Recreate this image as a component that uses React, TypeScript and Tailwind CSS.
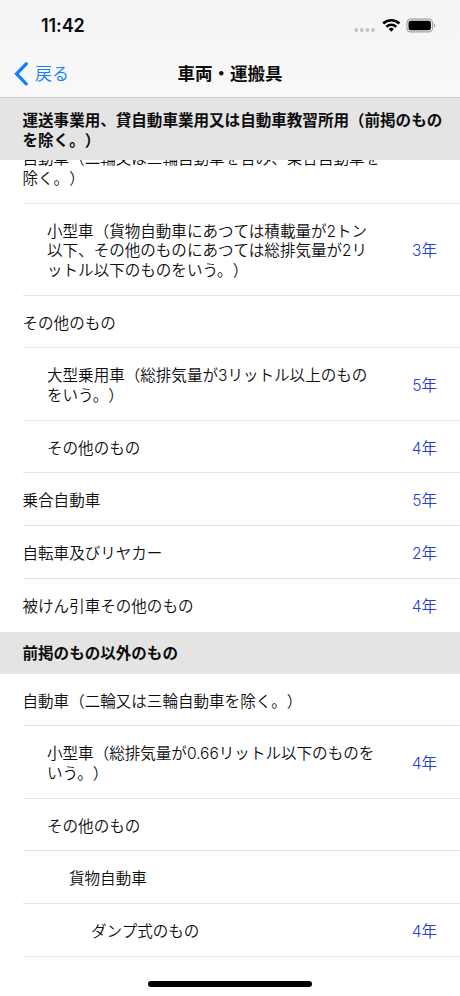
import clsx from "clsx";

type Item = {
  lines: string[];
  level?: 0 | 1 | 2 | 3;
  years?: string;
};

const transportItems: Item[] = [
  { lines: ["自動車（二輪又は三輪自動車を含み、乗合自動車を", "除く。）"] },
  {
    lines: [
      "小型車（貨物自動車にあつては積載量が2トン",
      "以下、その他のものにあつては総排気量が2リ",
      "ットル以下のものをいう。）",
    ],
    level: 1,
    years: "3年",
  },
  { lines: ["その他のもの"] },
  { lines: ["大型乗用車（総排気量が3リットル以上のもの", "をいう。）"], level: 1, years: "5年" },
  { lines: ["その他のもの"], level: 1, years: "4年" },
  { lines: ["乗合自動車"], years: "5年" },
  { lines: ["自転車及びリヤカー"], years: "2年" },
  { lines: ["被けん引車その他のもの"], years: "4年" },
];

const otherItems: Item[] = [
  { lines: ["自動車（二輪又は三輪自動車を除く。）"] },
  { lines: ["小型車（総排気量が0.66リットル以下のものを", "いう。）"], level: 1, years: "4年" },
  { lines: ["その他のもの"], level: 1 },
  { lines: ["貨物自動車"], level: 2 },
  { lines: ["ダンプ式のもの"], level: 3, years: "4年" },
];

const indents = ["pl-0", "pl-[24.5px]", "pl-[46.5px]", "pl-[68.5px]"];

const StatusBar = () => (
  <div className="flex h-[50px] items-center justify-between pl-[41px] pr-[24px] pt-[1px]">
    <span className="pt-[1px] text-[18px] font-semibold leading-none tracking-[-0.1px]">11:42</span>
    <div className="flex items-center">
      <svg width="22" height="16" viewBox="0 0 22 16" fill="#c3c3c3">
        <circle cx="2.2" cy="12" r="1.9" />
        <circle cx="7.8" cy="12" r="1.9" />
        <circle cx="13.4" cy="12" r="1.9" />
        <circle cx="19" cy="12" r="1.9" />
      </svg>
      <svg className="ml-[6px]" width="19" height="16" viewBox="0 0 19 16" fill="none" stroke="#000">
        <path d="M1.2 5.5a11.8 11.8 0 0 1 16.2 0" strokeWidth="2.6" />
        <path d="M4.3 8.8a7.3 7.3 0 0 1 10 0" strokeWidth="2.4" />
        <path d="M9.3 13.7 6.6 11a4 4 0 0 1 5.4 0z" fill="#000" stroke="none" />
      </svg>
      <svg className="ml-[5px]" width="30" height="16" viewBox="0 0 30 16">
        <rect x="0.9" y="1.1" width="25.6" height="12.8" rx="3.8" fill="none" stroke="#a3a3a3" strokeWidth="1.2" />
        <rect x="2.5" y="2.7" width="22.4" height="9.6" rx="2.2" fill="#000" />
        <path d="M27.9 5.3v4.4c.9-.4 1.5-1.2 1.5-2.2s-.6-1.8-1.5-2.2z" fill="#a3a3a3" />
      </svg>
    </div>
  </div>
);

const NavBar = () => (
  <div className="grid h-[47px] grid-cols-3 items-center pt-[1px]">
    <button type="button" className="flex items-center pl-[14px] text-[#147efb]">
      <svg width="15" height="24" viewBox="0 0 15 24" fill="none" stroke="currentColor" strokeWidth="3.3">
        <path d="M12.2 1.8 2.6 11.8l9.6 10" strokeLinecap="round" strokeLinejoin="miter" />
      </svg>
      <span className="ml-[6px] text-[17px] font-[350] leading-none">戻る</span>
    </button>
    <h1 className="text-center text-[17.5px] font-bold leading-none">車両・運搬具</h1>
  </div>
);

const SectionHeader = ({ lines, className }: { lines: string[]; className?: string }) => (
  <h2
    className={clsx(
      "bg-[#e4e4e4] pl-[22.5px] text-[15.55px] font-bold leading-[19.7px] whitespace-nowrap",
      className
    )}
  >
    {lines.map((line) => (
      <span key={line} className="block">
        {line}
      </span>
    ))}
  </h2>
);

const Row = ({ lines, level = 0, years, last }: Item & { last?: boolean }) => (
  <li
    className={clsx(
      "ml-[22.5px] flex items-center justify-between border-b pt-[18px] pb-[14px] pr-[23px] text-[15.55px] font-[350] leading-[19.7px]",
      last ? "border-transparent" : "border-[#e4e4e6]"
    )}
  >
    <div className={clsx("whitespace-nowrap", indents[level])}>
      {lines.map((line) => (
        <span key={line} className="block">
          {line}
        </span>
      ))}
    </div>
    {years && <span className="text-[#2640d0]">{years}</span>}
  </li>
);

const App = () => {
  return (
    <div className="relative flex h-[996px] w-[460px] flex-col overflow-hidden bg-white font-['Inter','Noto_Sans_CJK_JP',sans-serif] text-[#0c0c0c] [text-spacing-trim:space-all]">
      <header className="z-10 shrink-0 border-b border-[#cfcfcf] bg-linear-to-b from-[#f4f4f4] to-[#f9f9f9]">
        <StatusBar />
        <NavBar />
      </header>
      <SectionHeader
        className="z-10 h-[62px] shrink-0 pt-[13px]"
        lines={["運送事業用、貸自動車業用又は自動車教習所用（前掲のもの", "を除く。）"]}
      />

      {/* the first row is scrolled partly under the pinned header */}
      <ul className="-mt-[28.9px]">
        {transportItems.map((item, i) => (
          <Row key={i} {...item} last={i === transportItems.length - 1} />
        ))}
      </ul>

      <SectionHeader className="h-[42px] shrink-0 pt-[12px]" lines={["前掲のもの以外のもの"]} />
      <ul>
        {otherItems.map((item, i) => (
          <Row key={i} {...item} />
        ))}
      </ul>

      <div className="absolute bottom-[9px] left-[148px] h-[6px] w-[164px] rounded-full bg-black" />
    </div>
  );
};

export default App;
